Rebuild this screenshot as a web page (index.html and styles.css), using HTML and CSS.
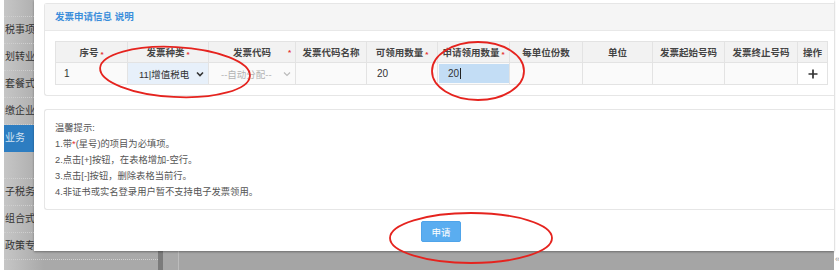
FILE: index.html
```html
<!DOCTYPE html>
<html lang="zh-CN">
<head>
    <meta charset="UTF-8">
    <meta name="viewport" content="width=device-width, initial-scale=1.0">
    <title>发票申请</title>
    <link rel="stylesheet" href="styles.css">
</head>
<body>
    <div class="screen">
        <div class="edge-left"></div>

        <div class="stage">
            <!-- 背后的页面（被遮罩变暗） -->
            <div class="page">
                <div class="nav">
                    <div class="nav-top"></div>
                    <div class="nav-item">税事项办理</div>
                    <div class="nav-item">划转业务办理</div>
                    <div class="nav-item">套餐式服务</div>
                    <div class="nav-item">缴企业社保</div>
                    <div class="nav-item active">业务</div>
                    <div class="nav-item"></div>
                    <div class="nav-item">子税务局</div>
                    <div class="nav-item">组合式税费</div>
                    <div class="nav-item">政策专区</div>
                </div>
                <div class="splitter"></div>
                <div class="main"></div>
            </div>

            <!-- 弹窗 -->
            <div class="modal">
                <div class="panel">
                    <div class="panel-head">发票申请信息 说明</div>
                    <div class="panel-body">
                        <table class="grid">
                            <colgroup>
                                <col style="width:72px">
                                <col style="width:81px">
                                <col style="width:87px">
                                <col style="width:71px">
                                <col style="width:71px">
                                <col style="width:72px">
                                <col style="width:73px">
                                <col style="width:70px">
                                <col style="width:72px">
                                <col style="width:73px">
                                <col style="width:30px">
                            </colgroup>
                            <thead>
                                <tr>
                                    <th>序号<i class="req">*</i></th>
                                    <th>发票种类<i class="req">*</i></th>
                                    <th class="has-flag">发票代码<i class="req flag">*</i></th>
                                    <th>发票代码名称</th>
                                    <th>可领用数量<i class="req">*</i></th>
                                    <th>申请领用数量<i class="req">*</i></th>
                                    <th>每单位份数</th>
                                    <th>单位</th>
                                    <th>发票起始号码</th>
                                    <th>发票终止号码</th>
                                    <th>操作</th>
                                </tr>
                            </thead>
                            <tbody>
                                <tr>
                                    <td class="num">1</td>
                                    <td class="field">
                                        <div class="select">
                                            <span class="select-text">11|增值税电</span>
                                            <svg class="chev" width="8" height="6" viewBox="0 0 8 6"><path d="M1 1.5 L4 4.5 L7 1.5" fill="none" stroke="#333" stroke-width="1.6"/></svg>
                                        </div>
                                    </td>
                                    <td class="field">
                                        <div class="select disabled">
                                            <span class="select-text">--自动分配--</span>
                                            <svg class="chev" width="8" height="6" viewBox="0 0 8 6"><path d="M1 1.5 L4 4.5 L7 1.5" fill="none" stroke="#bbb" stroke-width="1.2"/></svg>
                                        </div>
                                    </td>
                                    <td></td>
                                    <td class="num wide">20</td>
                                    <td class="field">
                                        <div class="qty">20<span class="caret"></span></div>
                                    </td>
                                    <td></td>
                                    <td></td>
                                    <td></td>
                                    <td></td>
                                    <td class="op">
                                        <svg width="10" height="10" viewBox="0 0 10 10"><path d="M5 0.5 V9.5 M0.5 5 H9.5" stroke="#333" stroke-width="1.7"/></svg>
                                    </td>
                                </tr>
                            </tbody>
                        </table>
                    </div>
                </div>

                <div class="panel tips">
                    <p>温馨提示:</p>
                    <p>1.带<span class="red">*</span>(星号)的项目为必填项。</p>
                    <p>2.点击[+]按钮，在表格增加-空行。</p>
                    <p>3.点击[-]按钮，删除表格当前行。</p>
                    <p>4.非证书或实名登录用户暂不支持电子发票领用。</p>
                </div>

                <div class="modal-foot">
                    <button class="btn">申请</button>
                </div>
            </div>
        </div>

        <div class="edge-right"><span class="collapse">«</span></div>

        <!-- 截图上的红色标注圈 -->
        <svg class="marks" width="839" height="270" viewBox="0 0 839 270">
            <ellipse cx="175" cy="72" rx="75" ry="25" transform="rotate(3 175 72)"/>
            <ellipse cx="478" cy="71" rx="46" ry="29"/>
            <ellipse cx="471" cy="238" rx="81" ry="25"/>
        </svg>
    </div>
</body>
</html>
```

FILE: styles.css
```css
body {
    margin: 0;
    font-family: "Liberation Sans", "Noto Sans CJK SC", sans-serif;
    background: #fff;
}
.screen {
    position: relative;
    display: flex;
    width: 839px;
    height: 270px;
    overflow: hidden;
}
.edge-left {
    width: 4px;
    background: #fff;
}
.edge-right {
    width: 5px;
    background: #fff;
    display: flex;
    align-items: flex-end;
    padding-bottom: 6px;
    box-sizing: border-box;
}
.collapse {
    font-size: 9px;
    color: #999;
    line-height: 1;
    margin-left: 1px;
}
.stage {
    position: relative;
    width: 830px;
}
.page {
    display: flex;
    height: 100%;
}
.nav {
    width: 154px;
    background: linear-gradient(to right, #c6c6c6, #a9a9a9 40px, #a9a9a9);
}
.nav-top {
    height: 16px;
    border-bottom: 1px dotted #cfcfcf;
}
.nav-item {
    height: 27px;
    box-sizing: border-box;
    border-bottom: 1px dotted #cfcfcf;
    line-height: 26px;
    font-size: 10px;
    color: #333;
    white-space: nowrap;
    overflow: hidden;
    padding-left: 1px;
}
.nav-item.active {
    background: #2d7dc1;
    color: #d5e4f2;
    border-bottom-color: transparent;
}
.splitter {
    width: 5px;
    background: #7b7b7b;
}
.main {
    flex: 1;
    background: linear-gradient(to right, #a8a8a8 15px, #bcbcbc 15px, #bcbcbc 16px, #a5a5a5 16px);
}

.modal {
    position: absolute;
    left: 30px;
    top: 0;
    width: 800px;
    height: 251px;
    box-sizing: border-box;
    background: #fff;
    padding: 3px 0 0 10px;
    box-shadow: 0 1px 2px rgba(0, 0, 0, 0.35);
}
.panel {
    border: 1px solid #e6e6e6;
    border-right: none;
    border-radius: 3px 0 0 3px;
}
.panel-head {
    height: 26px;
    line-height: 26px;
    background: #f5f5f5;
    border-bottom: 1px solid #e8e8e8;
    padding-left: 10px;
    font-size: 9.5px;
    font-weight: bold;
    color: #3b8edb;
}
.panel-body {
    padding: 10px 6px 10px 10px;
}
.grid {
    width: 772px;
    table-layout: fixed;
    border-collapse: collapse;
    font-size: 9.5px;
}
.grid th,
.grid td {
    border: 1px solid #e3e3e3;
    padding: 0;
}
.grid th {
    height: 20px;
    background: #f2f2f2;
    color: #444;
    font-weight: bold;
    text-align: center;
    white-space: nowrap;
}
.grid td {
    height: 21px;
    background: #fafafa;
    color: #333;
    font-size: 10px;
}
.req {
    color: #e53333;
    font-style: normal;
    font-size: 8px;
    margin-left: 2px;
    vertical-align: -1px;
}
.has-flag {
    position: relative;
}
.flag {
    position: absolute;
    right: 4px;
    top: 6px;
}
.grid td.num {
    padding-left: 8px;
}
.grid td.wide {
    padding-left: 10px;
}
.grid td.field {
    padding: 0;
}
.select {
    display: flex;
    align-items: center;
    justify-content: space-between;
    height: 21px;
    background: #e7f0fa;
    padding: 0 4px 0 11px;
    font-size: 9.5px;
    color: #333;
}
.select.disabled {
    background: transparent;
    color: #b3b3b3;
    padding-left: 12px;
}
.select-text {
    white-space: nowrap;
}
.chev {
    flex: none;
    margin-left: 2px;
}
.qty {
    height: 19px;
    line-height: 19px;
    margin: 1px 0 1px 1px;
    background: #c3ddf5;
    padding-left: 9px;
    color: #333;
}
.caret {
    display: inline-block;
    width: 1px;
    height: 11px;
    background: #222;
    vertical-align: -2px;
    margin-left: 1px;
}
.grid td.op {
    text-align: center;
    background: #fff;
}
.op svg {
    display: block;
    margin: 0 auto;
}

.tips {
    margin-top: 13px;
    padding: 10px 10px 9px 10px;
    font-size: 9.3px;
    color: #555;
    line-height: 16px;
}
.tips p {
    margin: 0;
}
.red {
    color: #e53333;
}
.modal-foot {
    display: flex;
    justify-content: center;
    padding-left: 4px;
    margin-top: 11px;
}
.btn {
    width: 40px;
    height: 21px;
    padding: 0;
    border: 1px solid #4fa4ea;
    border-radius: 2px;
    background: #5aadf0;
    color: #fff;
    font-family: "Noto Sans CJK SC", sans-serif;
    font-size: 9.5px;
}

.marks {
    position: absolute;
    left: 0;
    top: 0;
    pointer-events: none;
}
.marks ellipse {
    fill: none;
    stroke: #e5231e;
    stroke-width: 1.8;
}
```
